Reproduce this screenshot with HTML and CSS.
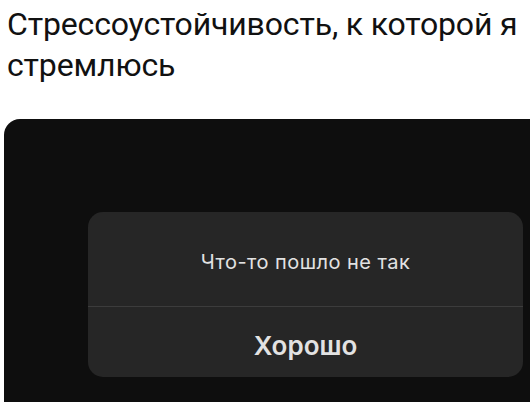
FILE: index.html
```html
<!DOCTYPE html>
<html lang="ru">
<head>
<meta charset="utf-8">
<link rel="stylesheet" href="styles.css">
</head>
<body>
  <h1 class="caption">Стрессоустойчивость, к которой я стремлюсь</h1>
  <div class="screen">
    <div class="alert">
      <div class="alert-message">Что-то пошло не так</div>
      <div class="alert-action">Хорошо</div>
    </div>
  </div>
</body>
</html>
```

FILE: styles.css
```css
html, body {
  margin: 0;
  padding: 0;
  background: #ffffff;
  height: 100%;
  overflow: hidden;
}

body {
  display: flex;
  flex-direction: column;
}

.caption {
  margin: 0;
  padding: 4px 0 0 7px;
  font-family: Roboto, "Noto Sans", sans-serif;
  font-weight: 400;
  font-size: 32px;
  line-height: 41px;
  letter-spacing: -0.15px;
  color: #111111;
}

.screen {
  flex: 1;
  margin: 33px 0 0 4px;
  background: #0e0e0e;
  border-top-left-radius: 16px;
  padding: 93px 7px 0 84px;
}

.alert {
  background: #262626;
  border-radius: 15px;
  height: 165px;
  display: flex;
  flex-direction: column;
  color: #e2e2e2;
  font-family: Inter, Roboto, sans-serif;
  text-align: center;
}

.alert-message {
  height: 95px;
  display: flex;
  align-items: center;
  justify-content: center;
  padding-top: 6px;
  box-sizing: border-box;
  font-size: 20px;
  font-weight: 400;
  letter-spacing: 0.45px;
  border-bottom: 1px solid #3c3c3c;
}

.alert-action {
  flex: 1;
  display: flex;
  align-items: center;
  justify-content: center;
  padding-top: 6px;
  font-size: 26px;
  font-weight: 600;
}
```
